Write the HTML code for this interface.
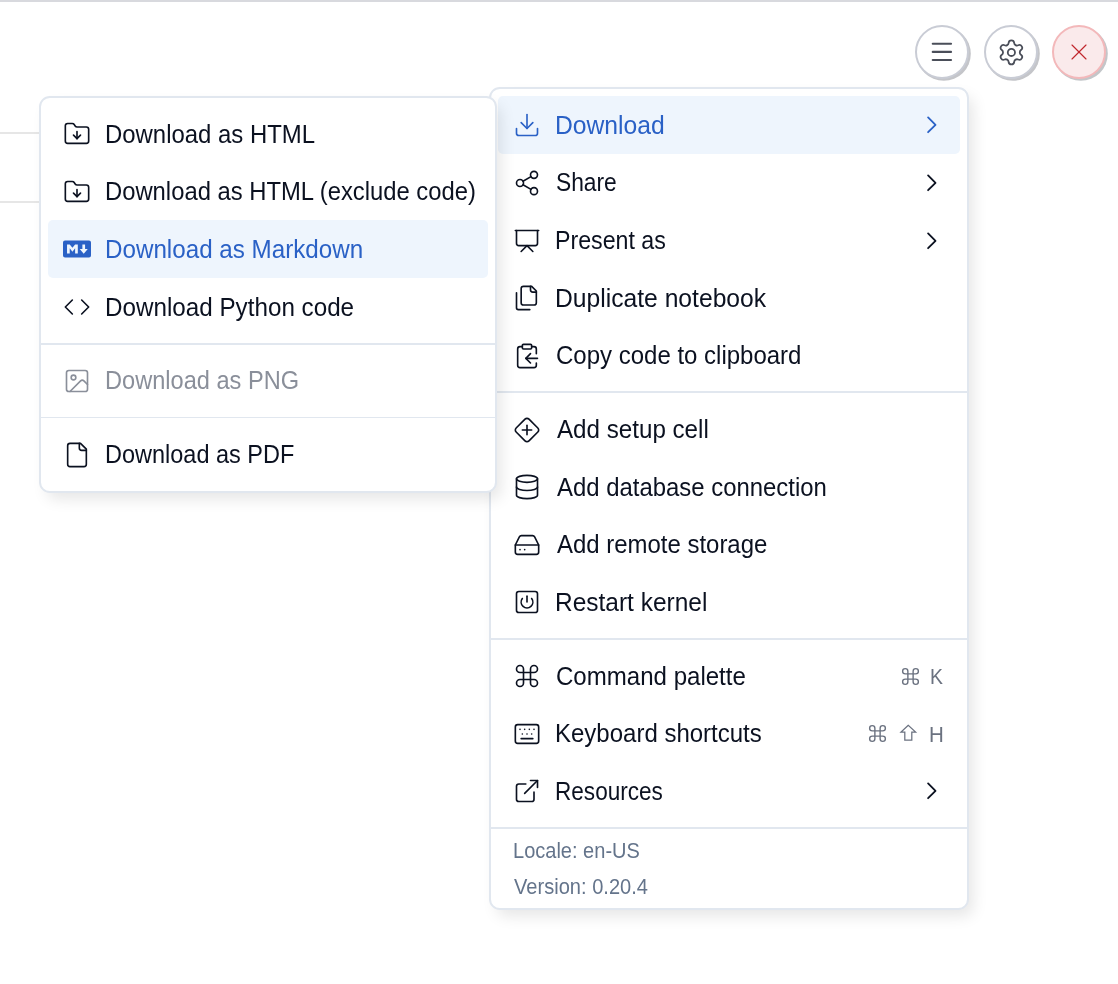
<!DOCTYPE html>
<html><head><meta charset="utf-8"><style>
*{box-sizing:border-box}
html,body{margin:0;padding:0}
body{width:1118px;height:984px;overflow:hidden;background:#fff;position:relative;-webkit-font-smoothing:antialiased;font-family:"Liberation Sans",sans-serif;color:#0b1120}
.topbar{position:absolute;left:0;top:0;width:1118px;height:2px;background:#d8d9de}
.bgline{position:absolute;left:0;width:60px;height:2px;background:#e6e6e6}
.btn{position:absolute;top:25px;width:54px;height:54px;border-radius:50%;border:2px solid #c9ccd5;background:#fff;box-shadow:1.8px 1.8px 0 0 #c4c5c9}
.btn svg{position:absolute}
.menu{position:absolute;will-change:transform;background:#fff;border:2px solid #e1e7ef;border-radius:10.8px;box-shadow:6px 8px 15px -2px rgba(0,0,0,0.1)}
.row{position:absolute;left:7.2px;height:57.6px;border-radius:5px}
.t{position:absolute;left:57.6px;top:0;line-height:57.6px;font-size:25px;white-space:nowrap;padding-top:0.7px;transform-origin:0 0}
.sep{position:absolute;left:0;right:0;height:1.8px;background:#e1e7ef}
.kc{position:absolute;width:21px;height:21px}
.sc{position:absolute;top:0;line-height:57.6px;font-size:21.6px;color:#6b7280;padding-top:1.1px;transform-origin:0 0}
.foot{position:absolute;left:20.6px;font-size:21.6px;line-height:36px;color:#64748b;white-space:nowrap;transform-origin:0 0}
</style></head><body>
<div class="topbar"></div>
<div class="bgline" style="top:132px"></div>
<div class="bgline" style="top:201px"></div>
<div class="btn" style="left:915.1px"><svg style="left:0;top:0;width:50px;height:50px;overflow:visible" viewBox="0 0 50 50" fill="none" stroke="#4a4e59" stroke-width="2.1" stroke-linecap="round"><line x1="15.75" y1="16.8" x2="34.05" y2="16.8"/><line x1="15.75" y1="24.9" x2="34.05" y2="24.9"/><line x1="15.75" y1="33" x2="34.05" y2="33"/></svg></div>
<div class="btn" style="left:984.1px"><svg style="left:10.55px;top:10.5px;width:28.8px;height:28.8px" viewBox="0 0 24 24" fill="none" stroke="#4a4e59" stroke-width="1.5" stroke-linecap="round" stroke-linejoin="round"><path d="M9.671 4.136a2.34 2.34 0 0 1 4.659 0 2.34 2.34 0 0 0 3.319 1.915 2.34 2.34 0 0 1 2.33 4.033 2.34 2.34 0 0 0 0 3.831 2.34 2.34 0 0 1-2.33 4.033 2.34 2.34 0 0 0-3.319 1.915 2.34 2.34 0 0 1-4.659 0 2.34 2.34 0 0 0-3.32-1.915 2.34 2.34 0 0 1-2.33-4.033 2.34 2.34 0 0 0 0-3.831A2.34 2.34 0 0 1 6.35 6.051a2.34 2.34 0 0 0 3.319-1.915"/><circle cx="12" cy="12" r="3"/></svg></div>
<div class="btn" style="left:1052px;background:#faeaeb;border-color:#f3b8ba;box-shadow:1.8px 1.8px 0 0 #c3c6c9"><svg style="left:11px;top:11.05px;width:28px;height:28px" viewBox="0 0 24 24" fill="none" stroke="#c1272d" stroke-width="1.0" stroke-linecap="round"><path d="M18 6 6 18"/><path d="m6 6 12 12"/></svg></div>
<div class="menu" style="left:489px;top:87px;width:479.8px;height:822.7px"><div class="row" style="top:7.2px;width:461.4px;background:#eef5fd;"><svg style="position:absolute;left:15.0px;top:15.2px;width:28px;height:28px;color:#2a61c6" viewBox="0 0 24 24" fill="none" stroke="currentColor" stroke-width="1.4" stroke-linecap="round" stroke-linejoin="round"><path d="M21 15v4a2 2 0 0 1-2 2H5a2 2 0 0 1-2-2v-4"/><polyline points="7 10 12 15 17 10"/><line x1="12" x2="12" y1="15" y2="3"/></svg><span class="t" style="color:#2a61c6;transform:scaleX(0.9869);left:56.63px">Download</span><svg style="position:absolute;left:418.4px;top:14.2px;width:29.6px;height:29.6px;color:#2a61c6" viewBox="0 0 24 24" fill="none" stroke="currentColor" stroke-width="1.5" stroke-linecap="round" stroke-linejoin="round"><path d="m9 18 6-6-6-6"/></svg></div><div class="row" style="top:64.8px;width:461.4px;"><svg style="position:absolute;left:15.0px;top:15.2px;width:28px;height:28px;color:#0b1120" viewBox="0 0 24 24" fill="none" stroke="currentColor" stroke-width="1.4" stroke-linecap="round" stroke-linejoin="round"><circle cx="18" cy="5" r="3"/><circle cx="6" cy="12" r="3"/><circle cx="18" cy="19" r="3"/><line x1="8.59" x2="15.42" y1="13.51" y2="17.49"/><line x1="15.41" x2="8.59" y1="6.51" y2="10.49"/></svg><span class="t" style="color:#0b1120;transform:scaleX(0.9109);left:57.69px">Share</span><svg style="position:absolute;left:418.4px;top:14.2px;width:29.6px;height:29.6px;color:#0b1120" viewBox="0 0 24 24" fill="none" stroke="currentColor" stroke-width="1.5" stroke-linecap="round" stroke-linejoin="round"><path d="m9 18 6-6-6-6"/></svg></div><div class="row" style="top:122.4px;width:461.4px;"><svg style="position:absolute;left:15.0px;top:15.2px;width:28px;height:28px;color:#0b1120" viewBox="0 0 24 24" fill="none" stroke="currentColor" stroke-width="1.4" stroke-linecap="round" stroke-linejoin="round"><path d="M2 3h20"/><path d="M21 3v11a2 2 0 0 1-2 2H5a2 2 0 0 1-2-2V3"/><path d="m7 21 5-5 5 5"/></svg><span class="t" style="color:#0b1120;transform:scaleX(0.9276);left:56.74px">Present as</span><svg style="position:absolute;left:418.4px;top:14.2px;width:29.6px;height:29.6px;color:#0b1120" viewBox="0 0 24 24" fill="none" stroke="currentColor" stroke-width="1.5" stroke-linecap="round" stroke-linejoin="round"><path d="m9 18 6-6-6-6"/></svg></div><div class="row" style="top:180.0px;width:461.4px;"><svg style="position:absolute;left:15.0px;top:15.2px;width:28px;height:28px;color:#0b1120" viewBox="0 0 24 24" fill="none" stroke="currentColor" stroke-width="1.4" stroke-linecap="round" stroke-linejoin="round"><path d="M20 7h-3a2 2 0 0 1-2-2V2"/><path d="M9 18a2 2 0 0 1-2-2V4a2 2 0 0 1 2-2h7l4 4v10a2 2 0 0 1-2 2Z"/><path d="M3 7.6v12.8A1.6 1.6 0 0 0 4.6 22h9.8"/></svg><span class="t" style="color:#0b1120;transform:scaleX(0.9863);left:56.63px">Duplicate notebook</span></div><div class="row" style="top:237.6px;width:461.4px;"><svg style="position:absolute;left:15.0px;top:15.2px;width:28px;height:28px;color:#0b1120" viewBox="0 0 24 24" fill="none" stroke="currentColor" stroke-width="1.4" stroke-linecap="round" stroke-linejoin="round"><rect width="8" height="4" x="8" y="2" rx="1" ry="1"/><path d="M8 4H6a2 2 0 0 0-2 2v14a2 2 0 0 0 2 2h12a2 2 0 0 0 2-2v-2"/><path d="M16 4h2a2 2 0 0 1 2 2v4"/><path d="M21 14H11"/><path d="m15 10-4 4 4 4"/></svg><span class="t" style="color:#0b1120;transform:scaleX(0.9599);left:57.64px">Copy code to clipboard</span></div><div class="sep" style="top:302.4px"></div><div class="row" style="top:311.4px;width:461.4px;"><svg style="position:absolute;left:15.0px;top:15.2px;width:28px;height:28px;color:#0b1120" viewBox="0 0 24 24" fill="none" stroke="currentColor" stroke-width="1.4" stroke-linecap="round" stroke-linejoin="round"><path d="M12 8v8"/><path d="M2.7 10.3a2.41 2.41 0 0 0 0 3.41l7.59 7.59a2.41 2.41 0 0 0 3.41 0l7.59-7.59a2.41 2.41 0 0 0 0-3.41L13.7 2.71a2.41 2.41 0 0 0-3.41 0z"/><path d="M8 12h8"/></svg><span class="t" style="color:#0b1120;transform:scaleX(0.9665);left:58.60px">Add setup cell</span></div><div class="row" style="top:369.0px;width:461.4px;"><svg style="position:absolute;left:15.0px;top:15.2px;width:28px;height:28px;color:#0b1120" viewBox="0 0 24 24" fill="none" stroke="currentColor" stroke-width="1.4" stroke-linecap="round" stroke-linejoin="round"><ellipse cx="12" cy="5" rx="9" ry="3"/><path d="M3 5V19A9 3 0 0 0 21 19V5"/><path d="M3 12A9 3 0 0 0 21 12"/></svg><span class="t" style="color:#0b1120;transform:scaleX(0.9564);left:58.60px">Add database connection</span></div><div class="row" style="top:426.6px;width:461.4px;"><svg style="position:absolute;left:15.0px;top:15.2px;width:28px;height:28px;color:#0b1120" viewBox="0 0 24 24" fill="none" stroke="currentColor" stroke-width="1.4" stroke-linecap="round" stroke-linejoin="round"><line x1="22" x2="2" y1="12" y2="12"/><path d="M5.45 5.11 2 12v6a2 2 0 0 0 2 2h16a2 2 0 0 0 2-2v-6l-3.45-6.89A2 2 0 0 0 16.76 4H7.24a2 2 0 0 0-1.79 1.11z"/><line x1="6" x2="6.01" y1="16" y2="16"/><line x1="10" x2="10.01" y1="16" y2="16"/></svg><span class="t" style="color:#0b1120;transform:scaleX(0.9578);left:58.60px">Add remote storage</span></div><div class="row" style="top:484.20000000000005px;width:461.4px;"><svg style="position:absolute;left:15.0px;top:15.2px;width:28px;height:28px;color:#0b1120" viewBox="0 0 24 24" fill="none" stroke="currentColor" stroke-width="1.4" stroke-linecap="round" stroke-linejoin="round"><rect width="18" height="18" x="3" y="3" rx="2"/><path d="M12 7v5"/><path d="M8 9a5 5 0 1 0 8 0"/></svg><span class="t" style="color:#0b1120;transform:scaleX(0.9788);left:56.64px">Restart kernel</span></div><div class="sep" style="top:549.0000000000001px"></div><div class="row" style="top:558.0000000000001px;width:461.4px;"><svg style="position:absolute;left:15.0px;top:15.2px;width:28px;height:28px;color:#0b1120" viewBox="0 0 24 24" fill="none" stroke="currentColor" stroke-width="1.4" stroke-linecap="round" stroke-linejoin="round"><path d="M15 6v12a3 3 0 1 0 3-3H6a3 3 0 1 0 3 3V6a3 3 0 1 0-3 3h12a3 3 0 1 0-3-3"/></svg><span class="t" style="color:#0b1120;transform:scaleX(0.9621);left:57.64px">Command palette</span><svg class="kc" style="left:401.5px;top:19.1px" viewBox="0 0 24 24" fill="none" stroke="#6b7280" stroke-width="1.6" stroke-linecap="round" stroke-linejoin="round"><path d="M15 6v12a3 3 0 1 0 3-3H6a3 3 0 1 0 3 3V6a3 3 0 1 0-3 3h12a3 3 0 1 0-3-3"/></svg><span class="sc" style="left:432.3px;transform:scaleX(0.9)">K</span></div><div class="row" style="top:615.6000000000001px;width:461.4px;"><svg style="position:absolute;left:15.0px;top:15.2px;width:28px;height:28px;color:#0b1120" viewBox="0 0 24 24" fill="none" stroke="currentColor" stroke-width="1.4" stroke-linecap="round" stroke-linejoin="round"><rect width="20" height="16" x="2" y="4" rx="2" ry="2"/><path d="M6 8h.001"/><path d="M10 8h.001"/><path d="M14 8h.001"/><path d="M18 8h.001"/><path d="M8 12h.001"/><path d="M12 12h.001"/><path d="M16 12h.001"/><path d="M7 16h10"/></svg><span class="t" style="color:#0b1120;transform:scaleX(0.9599);left:56.68px">Keyboard shortcuts</span><svg class="kc" style="left:369.3px;top:18.7px" viewBox="0 0 24 24" fill="none" stroke="#6b7280" stroke-width="1.6" stroke-linecap="round" stroke-linejoin="round"><path d="M15 6v12a3 3 0 1 0 3-3H6a3 3 0 1 0 3 3V6a3 3 0 1 0-3 3h12a3 3 0 1 0-3-3"/></svg><svg style="position:absolute;left:400.2px;top:17.7px;width:20px;height:20px" viewBox="0 0 20 20" fill="none" stroke="#6b7280" stroke-width="1.25" stroke-linejoin="miter"><path d="M10.3 3.3 L3 10 H6.8 V18 H13.8 V10 H17.6 Z"/></svg><span class="sc" style="left:430.5px;transform:scaleX(0.95)">H</span></div><div class="row" style="top:673.2000000000002px;width:461.4px;"><svg style="position:absolute;left:15.0px;top:15.2px;width:28px;height:28px;color:#0b1120" viewBox="0 0 24 24" fill="none" stroke="currentColor" stroke-width="1.4" stroke-linecap="round" stroke-linejoin="round"><path d="M15 3h6v6"/><path d="M10 14 21 3"/><path d="M18 13v6a2 2 0 0 1-2 2H5a2 2 0 0 1-2-2V8a2 2 0 0 1 2-2h6"/></svg><span class="t" style="color:#0b1120;transform:scaleX(0.9026);left:56.79px">Resources</span><svg style="position:absolute;left:418.4px;top:14.2px;width:29.6px;height:29.6px;color:#0b1120" viewBox="0 0 24 24" fill="none" stroke="currentColor" stroke-width="1.5" stroke-linecap="round" stroke-linejoin="round"><path d="m9 18 6-6-6-6"/></svg></div><div class="sep" style="top:738.0000000000002px"></div><div class="foot" style="top:744.1px;left:21.5px;transform:scaleX(0.927)">Locale: en-US</div><div class="foot" style="top:780.1px;left:22.9px;transform:scaleX(0.930)">Version: 0.20.4</div></div>
<div class="menu" style="left:39px;top:96px;width:458.3px;height:396.7px"><div class="row" style="top:7.2px;width:439.9px;"><svg style="position:absolute;left:15.0px;top:15.2px;width:28px;height:28px;color:#0b1120" viewBox="0 0 24 24" fill="none" stroke="currentColor" stroke-width="1.4" stroke-linecap="round" stroke-linejoin="round"><path d="M20 20a2 2 0 0 0 2-2V8a2 2 0 0 0-2-2h-7.9a2 2 0 0 1-1.69-.9L9.6 3.9A2 2 0 0 0 7.93 3H4a2 2 0 0 0-2 2v13a2 2 0 0 0 2 2Z"/><path d="M12 10v6"/><path d="m15 13-3 3-3-3"/></svg><span class="t" style="color:#0b1120;transform:scaleX(0.9569);left:56.89px">Download as HTML</span></div><div class="row" style="top:64.8px;width:439.9px;"><svg style="position:absolute;left:15.0px;top:15.2px;width:28px;height:28px;color:#0b1120" viewBox="0 0 24 24" fill="none" stroke="currentColor" stroke-width="1.4" stroke-linecap="round" stroke-linejoin="round"><path d="M20 20a2 2 0 0 0 2-2V8a2 2 0 0 0-2-2h-7.9a2 2 0 0 1-1.69-.9L9.6 3.9A2 2 0 0 0 7.93 3H4a2 2 0 0 0-2 2v13a2 2 0 0 0 2 2Z"/><path d="M12 10v6"/><path d="m15 13-3 3-3-3"/></svg><span class="t" style="color:#0b1120;transform:scaleX(0.9522);left:56.90px">Download as HTML (exclude code)</span></div><div class="row" style="top:122.4px;width:439.9px;background:#eef5fd;"><svg style="position:absolute;left:15.0px;top:14.5px;width:28px;height:28px;color:#2a61c6" viewBox="0 0 24 24" fill="none" stroke="currentColor" stroke-width="1.4" stroke-linecap="round" stroke-linejoin="round"><path fill="currentColor" stroke="none" d="M22.27 19.385H1.73A1.73 1.73 0 010 17.655V6.345a1.73 1.73 0 011.73-1.73h20.54A1.73 1.73 0 0124 6.345v11.308a1.73 1.73 0 01-1.73 1.731zM5.769 15.923v-4.5l2.308 2.885 2.307-2.885v4.5h2.308V8.078h-2.308l-2.307 2.885-2.308-2.885H3.46v7.847zM21.232 12h-2.309V8.077h-2.307V12h-2.308l3.461 4.039z"/></svg><span class="t" style="color:#2a61c6;transform:scaleX(0.9677);left:56.86px">Download as Markdown</span></div><div class="row" style="top:180.0px;width:439.9px;"><svg style="position:absolute;left:15.0px;top:15.2px;width:28px;height:28px;color:#0b1120" viewBox="0 0 24 24" fill="none" stroke="currentColor" stroke-width="1.4" stroke-linecap="round" stroke-linejoin="round"><polyline points="16 18 22 12 16 6"/><polyline points="8 6 2 12 8 18"/></svg><span class="t" style="color:#0b1120;transform:scaleX(0.9688);left:56.86px">Download Python code</span></div><div class="sep" style="top:244.79999999999998px"></div><div class="row" style="top:253.79999999999998px;width:439.9px;"><svg style="position:absolute;left:15.0px;top:15.2px;width:28px;height:28px;color:#8a8f9a" viewBox="0 0 24 24" fill="none" stroke="currentColor" stroke-width="1.4" stroke-linecap="round" stroke-linejoin="round"><rect width="18" height="18" x="3" y="3" rx="2" ry="2"/><circle cx="9" cy="9" r="2"/><path d="m21 15-3.086-3.086a2 2 0 0 0-2.828 0L6 21"/></svg><span class="t" style="color:#8a8f9a;transform:scaleX(0.9438);left:56.91px">Download as PNG</span></div><div class="sep" style="top:318.59999999999997px"></div><div class="row" style="top:327.59999999999997px;width:439.9px;"><svg style="position:absolute;left:15.0px;top:15.2px;width:28px;height:28px;color:#0b1120" viewBox="0 0 24 24" fill="none" stroke="currentColor" stroke-width="1.4" stroke-linecap="round" stroke-linejoin="round"><path d="M15 2H6a2 2 0 0 0-2 2v16a2 2 0 0 0 2 2h12a2 2 0 0 0 2-2V7Z"/><path d="M14 2v4a2 2 0 0 0 2 2h4"/></svg><span class="t" style="color:#0b1120;transform:scaleX(0.9394);left:56.92px">Download as PDF</span></div></div>
</body></html>
